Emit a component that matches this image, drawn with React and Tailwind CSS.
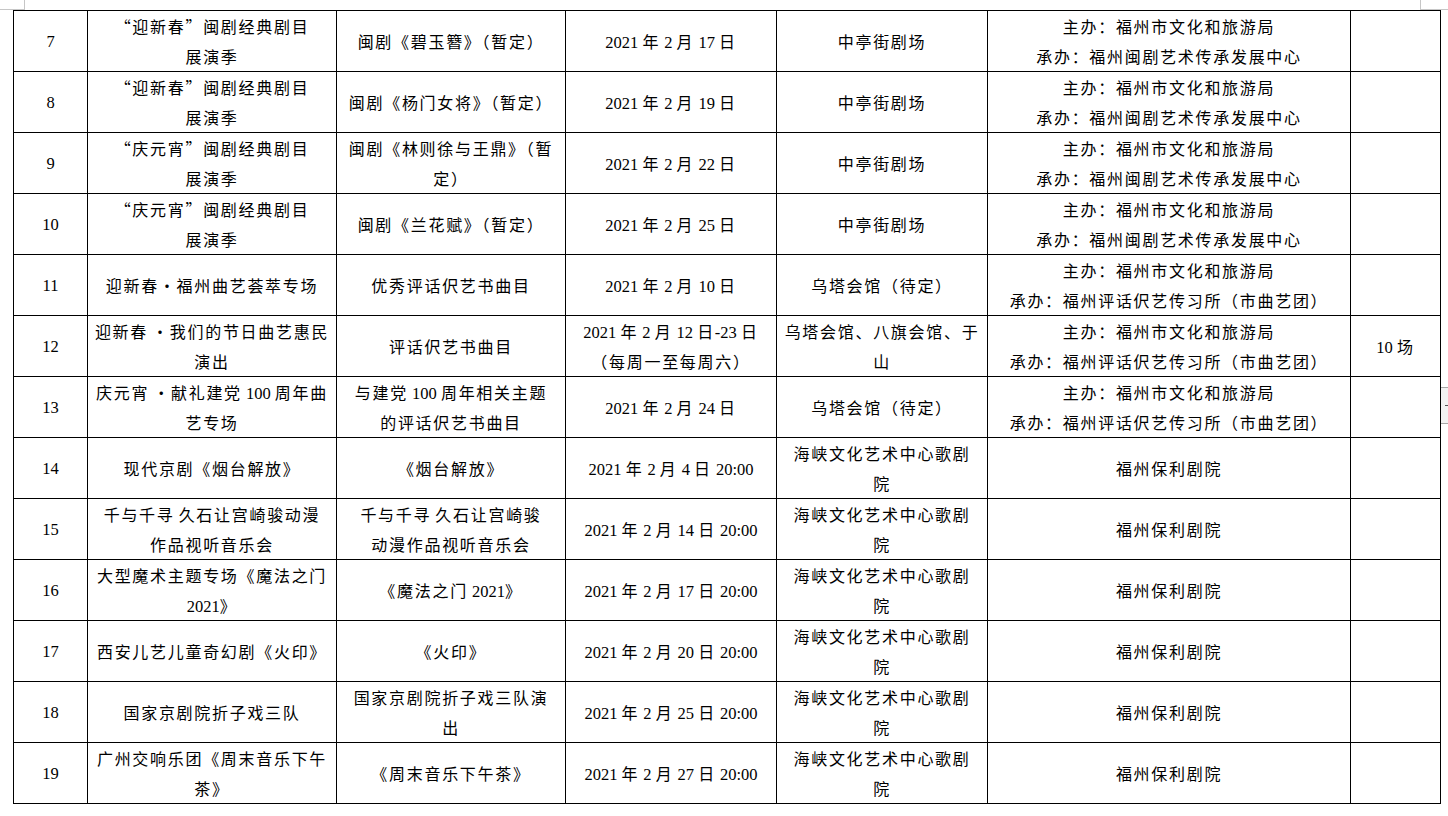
import React from 'react';

const ZB = ['主办：福州市文化和旅游局', '承办：福州闽剧艺术传承发展中心'];
const PH = ['主办：福州市文化和旅游局', '承办：福州评话伬艺传习所（市曲艺团）'];
const HX = ['海峡文化艺术中心歌剧', '院'];
const BL = ['福州保利剧院'];

const rows = [
  ['7', ['“迎新春”闽剧经典剧目', '展演季'], ['闽剧《碧玉簪》（暂定）'], ['2021 年 2 月 17 日'], ['中亭街剧场'], ZB, []],
  ['8', ['“迎新春”闽剧经典剧目', '展演季'], ['闽剧《杨门女将》（暂定）'], ['2021 年 2 月 19 日'], ['中亭街剧场'], ZB, []],
  ['9', ['“庆元宵”闽剧经典剧目', '展演季'], ['闽剧《林则徐与王鼎》（暂', '定）'], ['2021 年 2 月 22 日'], ['中亭街剧场'], ZB, []],
  ['10', ['“庆元宵”闽剧经典剧目', '展演季'], ['闽剧《兰花赋》（暂定）'], ['2021 年 2 月 25 日'], ['中亭街剧场'], ZB, []],
  ['11', ['迎新春•福州曲艺荟萃专场'], ['优秀评话伬艺书曲目'], ['2021 年 2 月 10 日'], ['乌塔会馆（待定）'], PH, []],
  ['12', ['迎新春 •我们的节日曲艺惠民', '演出'], ['评话伬艺书曲目'], ['2021 年 2 月 12 日-23 日', '（每周一至每周六）'], ['乌塔会馆、八旗会馆、于', '山'], PH, ['10 场']],
  ['13', ['庆元宵 •献礼建党 100 周年曲', '艺专场'], ['与建党 100 周年相关主题', '的评话伬艺书曲目'], ['2021 年 2 月 24 日'], ['乌塔会馆（待定）'], PH, []],
  ['14', ['现代京剧《烟台解放》'], ['《烟台解放》'], ['2021 年 2 月 4 日 20:00'], HX, BL, []],
  ['15', ['千与千寻 久石让宫崎骏动漫', '作品视听音乐会'], ['千与千寻 久石让宫崎骏', '动漫作品视听音乐会'], ['2021 年 2 月 14 日 20:00'], HX, BL, []],
  ['16', ['大型魔术主题专场《魔法之门', '2021》'], ['《魔法之门 2021》'], ['2021 年 2 月 17 日 20:00'], HX, BL, []],
  ['17', ['西安儿艺儿童奇幻剧《火印》'], ['《火印》'], ['2021 年 2 月 20 日 20:00'], HX, BL, []],
  ['18', ['国家京剧院折子戏三队'], ['国家京剧院折子戏三队演', '出'], ['2021 年 2 月 25 日 20:00'], HX, BL, []],
  ['19', ['广州交响乐团《周末音乐下午', '茶》'], ['《周末音乐下午茶》'], ['2021 年 2 月 27 日 20:00'], HX, BL, []],
];

// latin runs in Times-like serif, CJK runs spaced out like Word's character grid
function Txt({ s }) {
  const parts = s.split(/([\x20-\x7E]+)/).filter(Boolean);
  return parts.map((p, i) =>
    /^[\x20-\x7E]+$/.test(p) ? (
      <span key={i} className="font-['Liberation_Serif',serif] text-[16.5px] tracking-normal">{p}</span>
    ) : (
      <span key={i} className="font-['Noto_Sans_CJK_SC',sans-serif] tracking-[1.7px]">{p}</span>
    )
  );
}

function Cell({ lines }) {
  return (
    <td className="border border-black p-0 h-[60px] text-center align-middle">
      <div className="h-[60px] flex flex-col justify-center overflow-hidden">
        {lines.map((l, i) => (
          <div key={i} className="h-[30px] whitespace-nowrap leading-[30px]">
            <Txt s={l} />
          </div>
        ))}
      </div>
    </td>
  );
}

export default function App() {
  return (
    <div className="relative w-[1448px] h-[816px] bg-white overflow-hidden text-black text-[16px]">
      {/* page margin marks */}
      <div className="absolute left-0 top-0 w-[25px] h-[10px] border-r border-b border-[#c6c6c6]" />
      <div className="absolute left-[1420px] top-0 w-[28px] h-[10px] border-l border-b border-[#c6c6c6]" />
      {/* table move handle */}
      <div className="absolute left-[1441px] top-[387px] w-[7px] h-[37px] bg-[#f2f2f2] border-t border-b border-[#a8a8a8]">
        <div className="absolute left-[4px] top-[17px] w-[3px] h-px bg-[#555]" />
      </div>

      <div className="pt-[10px] pl-[13px]">
        <table className="table-fixed border-collapse w-[1427px]">
          <colgroup>
            <col className="w-[74px]" />
            <col className="w-[249px]" />
            <col className="w-[229px]" />
            <col className="w-[211px]" />
            <col className="w-[211px]" />
            <col className="w-[363px]" />
            <col className="w-[90px]" />
          </colgroup>
          <tbody>
            {rows.map((r) => (
              <tr key={r[0]}>
                <Cell lines={[r[0]]} />
                {r.slice(1).map((c, i) => (
                  <Cell key={i} lines={c} />
                ))}
              </tr>
            ))}
          </tbody>
        </table>
      </div>
    </div>
  );
}
